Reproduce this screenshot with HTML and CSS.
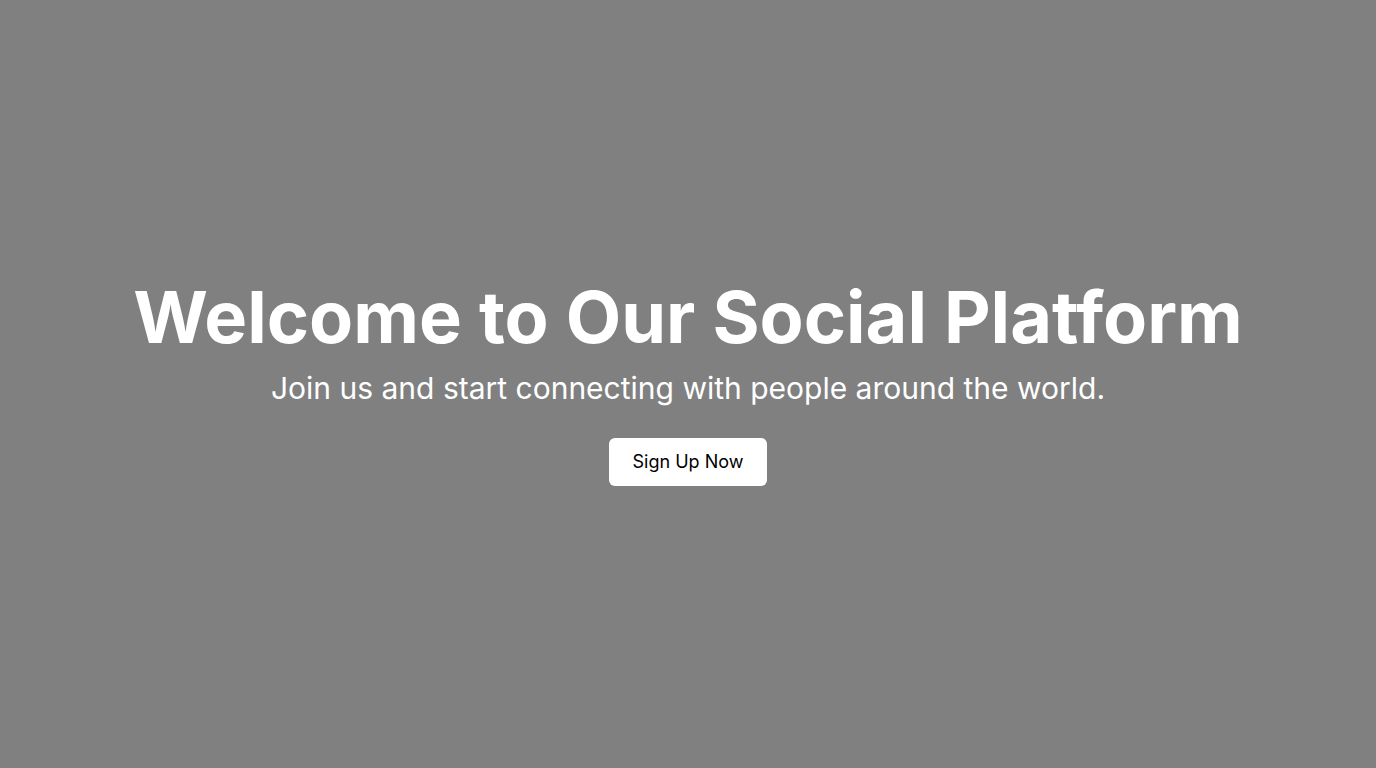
FILE: index.html
```html
<!DOCTYPE html>
<html lang="en">
<head>
<meta charset="utf-8">
<title>Welcome</title>
<link rel="stylesheet" href="styles.css">
</head>
<body>
<main class="hero">
  <h1 class="hero-title">Welcome to Our Social Platform</h1>
  <p class="hero-sub">Join us and start connecting with people around the world.</p>
  <a class="hero-btn" href="#">Sign Up Now</a>
</main>
</body>
</html>
```

FILE: styles.css
```css
html, body {
  margin: 0;
  padding: 0;
  height: 100%;
}
body {
  background: #808080;
  font-family: Inter, "Noto Sans", sans-serif;
  color: #fff;
}
.hero {
  box-sizing: border-box;
  height: 100%;
  padding-bottom: 8px;
  display: flex;
  flex-direction: column;
  align-items: center;
  justify-content: center;
  text-align: center;
}
.hero-title {
  margin: 0 0 9px;
  font-size: 72px;
  font-weight: 700;
  line-height: 1.2;
}
.hero-sub {
  margin: 0 0 32px;
  font-size: 30px;
  line-height: 1.2;
}
.hero-btn {
  display: inline-block;
  background: #fff;
  color: #000;
  text-decoration: none;
  font-size: 18px;
  line-height: 24px;
  padding: 12px 24px;
  border-radius: 6px;
}
```
